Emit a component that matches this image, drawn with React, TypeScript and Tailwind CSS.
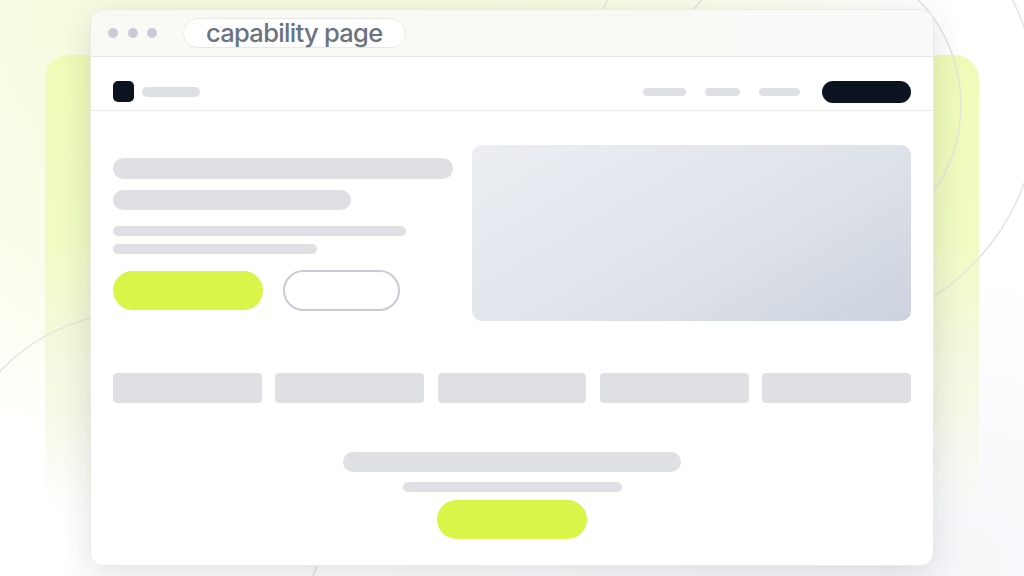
export default function App() {
  return (
    <div className="relative h-[576px] w-[1024px] overflow-hidden bg-white pl-[90px] pt-[9px] font-['Inter',sans-serif]">
      {/* backdrop */}
      <div className="absolute inset-0 bg-[radial-gradient(ellipse_620px_500px_at_300px_0px,#f7fcde_0%,#f8fce2_45%,#fcfef0_75%,transparent_100%)]" />
      <div className="absolute inset-0 bg-[radial-gradient(ellipse_620px_300px_at_900px_560px,#f6f7fa_0%,transparent_100%)]" />
      <div className="absolute left-[45px] top-[55px] h-[460px] w-[934px] rounded-t-[24px] bg-[linear-gradient(to_bottom,#f0fbb8_0%,#f2fbc4_40%,#f3f9d8_58%,#f6f9e8_76%,transparent_100%)]" />
      <svg className="absolute inset-0" width="1024" height="576" fill="none" stroke="#e4e6dc" strokeWidth="1.5">
        <circle cx="810" cy="105" r="151" />
        <circle cx="810" cy="105" r="228" />
        <circle cx="138" cy="502" r="190" />
      </svg>

      {/* window */}
      <div className="relative flex h-[557px] w-[844px] flex-col overflow-hidden rounded-[14px] border border-[#ebebe6] shadow-[0_8px_34px_rgba(30,40,50,0.14)]">
        <div className="flex h-[47px] shrink-0 items-center border-b border-[#e6e6e2] bg-[#f9f9f7]/95 pl-[17px]">
          <div className="flex gap-[9.5px]">
            <span className="size-[10px] rounded-full bg-[#c9ccd6]" />
            <span className="size-[10px] rounded-full bg-[#c9ccd6]" />
            <span className="size-[10px] rounded-full bg-[#c9ccd6]" />
          </div>
          <div className="ml-[26px] flex h-[30px] w-[223px] items-center rounded-full border border-[#e8e8e4] bg-white pl-[22px] text-[25.5px] font-medium leading-none tracking-[-0.7px] text-[#6b7280]">
            capability page
          </div>
        </div>

        <div className="flex min-h-0 flex-1 flex-col bg-white">
          <nav className="flex h-[54px] shrink-0 items-center border-b border-[#e9e9e5] px-[22px] pt-[16px]">
            <div className="size-[21px] rounded-[5px] bg-[#0b1220]" />
            <div className="ml-[8px] h-[10px] w-[58px] rounded-full bg-[#dfe0e4]" />
            <div className="ml-auto h-[8px] w-[43px] rounded-full bg-[#dfe0e4]" />
            <div className="ml-[19px] h-[8px] w-[35px] rounded-full bg-[#dfe0e4]" />
            <div className="ml-[19px] h-[8px] w-[41px] rounded-full bg-[#dfe0e4]" />
            <div className="ml-[22px] h-[22px] w-[89px] rounded-full bg-[#0b1220]" />
          </nav>

          <main className="flex flex-1 flex-col px-[22px] pt-[34px]">
            <section className="grid grid-cols-[340px_439px] gap-x-[19px]">
              <div className="flex flex-col pt-[13px]">
                <div className="h-[21px] w-[340px] rounded-full bg-[#dfe0e4]" />
                <div className="mt-[11px] h-[20px] w-[238px] rounded-full bg-[#dfe0e4]" />
                <div className="mt-[16px] h-[10px] w-[293px] rounded-full bg-[#dfe0e4]" />
                <div className="mt-[8px] h-[10px] w-[204px] rounded-full bg-[#dfe0e4]" />
                <div className="mt-[16px] flex items-center gap-[20px]">
                  <div className="h-[39px] w-[150px] rounded-full bg-[#d9f54a]" />
                  <div className="h-[41px] w-[117px] rounded-full border-2 border-[#c9ccd6] bg-white" />
                </div>
              </div>
              <div className="h-[176px] rounded-[10px] bg-[linear-gradient(150deg,#eceef1_0%,#e6eaf0_25%,#dde2e8_60%,#ccd3df_100%)]" />
            </section>

            <section className="mt-[51.5px] grid grid-cols-5 gap-x-[13.5px]">
              <div className="h-[30px] rounded-[4px] bg-[#dfe0e4]" />
              <div className="h-[30px] rounded-[4px] bg-[#dfe0e4]" />
              <div className="h-[30px] rounded-[4px] bg-[#dfe0e4]" />
              <div className="h-[30px] rounded-[4px] bg-[#dfe0e4]" />
              <div className="h-[30px] rounded-[4px] bg-[#dfe0e4]" />
            </section>

            <section className="mt-[49.5px] flex flex-col items-center">
              <div className="h-[20px] w-[338px] rounded-full bg-[#dfe0e4]" />
              <div className="mt-[10px] h-[10px] w-[219px] rounded-full bg-[#dfe0e4]" />
              <div className="mt-[8px] h-[39px] w-[150px] rounded-full bg-[#d9f54a]" />
            </section>
          </main>
        </div>
      </div>
    </div>
  );
}
